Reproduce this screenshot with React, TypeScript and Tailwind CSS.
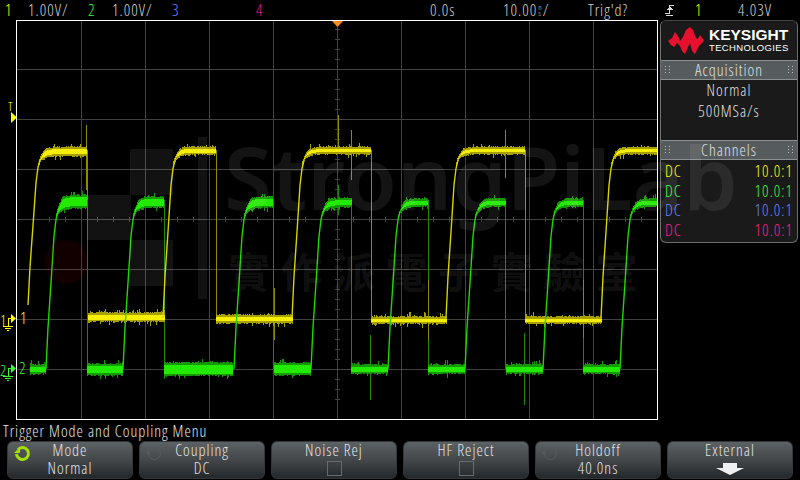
import React from 'react';

const SCOPE_FONT = "font-['Open_Sans',Roboto,sans-serif] font-light [font-stretch:condensed] tracking-[1px]";

// deterministic noise so the traces do not change between renders
function makeRand(seed: number) {
  let s = seed;
  return () => {
    s = (s * 16807) % 2147483647;
    return s / 2147483647;
  };
}

const RISE: [number, number][] = [[0, 0], [2, 0.25], [5, 0.52], [8, 0.8], [10, 0.9], [12, 0.95]];

function risePath(x0: number, low: number, high: number) {
  return RISE.map(([dx, f], i) => `${i ? 'L' : 'M'}${x0 + dx} ${low - (low - high) * f}`).join(' ');
}

type Band = { x0: number; x1: number; y: number; half: number; knee?: number };

// knee: how far below the plateau the band starts, it decays into the flat part
function bandPaths(bands: Band[], seed: number) {
  const rand = makeRand(seed);
  let core = '';
  let fringe = '';
  for (const b of bands) {
    for (let x = b.x0; x < b.x1; x++) {
      const dx = x - b.x0;
      const k = b.knee ? b.knee * Math.exp(-dx / 4) : 0;
      const half = b.knee ? b.half * Math.min(1, 0.35 + dx / 10) : b.half;
      const spikeOk = !b.knee || dx > 6;
      const extra = spikeOk && rand() > 0.93 ? 2 + rand() * 3 : rand() * 1.6;
      const extra2 = spikeOk && rand() > 0.93 ? 2 + rand() * 3 : rand() * 1.6;
      const y = b.y + k;
      fringe += `M${x + 0.5} ${Math.round(y - half - extra)}V${Math.round(y + half + extra2)}`;
      const top = Math.round(y - half + 1.5);
      const bot = Math.round(y + half - 1.5);
      if (bot > top) core += `M${x + 0.5} ${top}V${bot}`;
    }
  }
  return { core, fringe };
}

const YELLOW_BANDS: Band[] = [
  { x0: 38, x1: 87, y: 151.5, half: 4, knee: 13 },
  { x0: 173, x1: 216, y: 150.5, half: 3.5, knee: 13 },
  { x0: 302, x1: 371, y: 150.5, half: 3, knee: 13 },
  { x0: 456, x1: 525, y: 150.5, half: 3, knee: 13 },
  { x0: 611, x1: 657, y: 150.5, half: 3, knee: 13 },
  { x0: 88, x1: 165, y: 317, half: 4 },
  { x0: 216, x1: 293, y: 319, half: 3.5 },
  { x0: 371, x1: 447, y: 320, half: 3 },
  { x0: 525, x1: 602, y: 320, half: 3 },
];

const GREEN_BANDS: Band[] = [
  { x0: 56, x1: 87, y: 201.5, half: 6, knee: 14 },
  { x0: 133, x1: 164, y: 202, half: 5, knee: 14 },
  { x0: 244, x1: 273, y: 202, half: 5, knee: 14 },
  { x0: 321, x1: 352, y: 202.5, half: 4, knee: 14 },
  { x0: 398, x1: 428, y: 202.5, half: 3.5, knee: 14 },
  { x0: 475, x1: 506, y: 202.5, half: 3.5, knee: 14 },
  { x0: 553, x1: 583, y: 202.5, half: 3.5, knee: 14 },
  { x0: 630, x1: 657, y: 202.5, half: 3.5, knee: 14 },
  { x0: 30, x1: 46, y: 369, half: 4 },
  { x0: 87, x1: 123, y: 369.5, half: 5 },
  { x0: 164, x1: 233, y: 369, half: 6 },
  { x0: 274, x1: 311, y: 369, half: 5.5 },
  { x0: 351, x1: 388, y: 369, half: 4 },
  { x0: 428, x1: 465, y: 369, half: 4 },
  { x0: 506, x1: 543, y: 369, half: 4 },
  { x0: 583, x1: 620, y: 369, half: 4 },
];

const YELLOW_RISES = [28, 163, 292, 446, 601];
const GREEN_RISES = [46, 123, 234, 311, 388, 465, 543, 620];
const YELLOW_FALLS = [87, 216, 371, 525];
const GREEN_FALLS = [87, 164, 273, 351, 428, 505, 583];

const yellow = bandPaths(YELLOW_BANDS, 4711);
const green = bandPaths(GREEN_BANDS, 9241);

const V_GRID = [81, 145, 209, 273, 337, 401, 465, 529, 593];
const H_GRID = [69, 119, 169, 219, 269, 319, 369];

function Traces() {
  const hTicks = Array.from({ length: 39 }, (_, i) => 33 + i * 16);
  const vTicks = Array.from({ length: 38 }, (_, i) => 29 + i * 10);
  return (
    <svg className="block w-[640px] h-[398px]" viewBox="17 21 640 398" shapeRendering="crispEdges">
      {V_GRID.map((x) => <path key={x} d={`M${x + 0.5} 21V419`} stroke="#424242" />)}
      {H_GRID.map((y) => <path key={y} d={`M17 ${y + 0.5}H657`} stroke="#424242" />)}
      {hTicks.map((x) => <path key={x} d={`M${x + 0.5} 217V222`} stroke="#424242" />)}
      {vTicks.map((y) => <path key={y} d={`M335 ${y + 0.5}H340`} stroke="#424242" />)}

      {/* falling edges and glitches, drawn dim */}
      {YELLOW_FALLS.map((x) => <path key={x} d={`M${x + 0.5} 150V318`} stroke="#8f8a00" />)}
      {GREEN_FALLS.map((x) => <path key={x} d={`M${x + 0.5} 200V369`} stroke="#1c8a00" />)}
      <path d="M86.5 125V190M338.5 115V150M351.5 130V180M371.5 150V170M505.5 130V178M274.5 288V340M428.5 280V340M583.5 280V338" stroke="#8f8a00" />
      <path d="M370.5 335V400M524.5 333V405M338.5 185V215" stroke="#1c8a00" />

      <path d={yellow.fringe} stroke="#a8a000" fill="none" />
      <path d={green.fringe} stroke="#149a00" fill="none" />
      <path d={yellow.core} stroke="#f6f000" fill="none" />
      <path d={green.core} stroke="#22ea00" fill="none" />

      <g fill="none" shapeRendering="auto" strokeWidth="1.4">
        {YELLOW_RISES.map((x, i) => (
          <path key={x} d={risePath(x, i === 0 ? 305 : 318, 152)} stroke="#d8d200" />
        ))}
        {GREEN_RISES.map((x) => <path key={x} d={risePath(x, 369, 203)} stroke="#1fd800" />)}
      </g>

      <path d="M332 21H343L337.5 27Z" fill="#ff8a1c" shapeRendering="auto" />
    </svg>
  );
}

function Watermark() {
  return (
    <div className="absolute inset-0 pointer-events-none overflow-hidden">
      <svg className="absolute left-0 top-0 w-[800px] h-[480px]" viewBox="0 0 800 480">
        <path d="M130 149H173V195H130ZM87 195H131V240H87ZM130 240H173V286H130ZM198 137H207V299H198Z" fill="#ffffff" fillOpacity="0.07" />
        <circle cx="66" cy="262" r="22" fill="#ff0000" fillOpacity="0.07" />
      </svg>
      <div className="absolute left-[224px] top-[126px] text-[87px] leading-[100px] font-semibold tracking-normal whitespace-nowrap text-white/[0.08] font-['Noto_Sans',sans-serif] [font-stretch:normal]">
        StrongPiLab
      </div>
      <div className="absolute left-[228px] top-[245px] text-[42px] leading-[50px] font-bold tracking-[10.5px] whitespace-nowrap text-white/[0.08] font-['Noto_Sans_CJK_TC',sans-serif] [font-stretch:normal]">
        實作派電子實驗室
      </div>
    </div>
  );
}

function GroundMark({ color }: { color: string }) {
  return (
    <svg className="block w-[16px] h-[20px]" viewBox="0 0 16 20" shapeRendering="crispEdges">
      <path d="M8.5 14V6.5H11" stroke={color} fill="none" />
      <path d="M11 2L16 6.5L11 11Z" fill={color} shapeRendering="auto" />
      <path d="M3 14.5H13M5 16.5H11M7 18.5H9" stroke={color} />
    </svg>
  );
}

function ChannelMarkers() {
  return (
    <>
      <div className="absolute left-[8px] top-[100px] text-[13px] leading-[13px] text-[#ffff00]">T</div>
      <svg className="absolute left-[11px] top-[112px] w-[6px] h-[11px]" viewBox="0 0 6 11">
        <path d="M0 0L6 5.5L0 11Z" fill="#ffff00" />
      </svg>
      <div className="absolute left-0 top-[312px] w-[32px] h-[20px]">
        <div className="absolute left-0 top-0"><GroundMark color="#ffff00" /></div>
        <div className="absolute left-0 top-0 text-[15px] leading-[16px] text-[#ffff00]">1</div>
        <div className="absolute left-[20px] top-[-2px] text-[16px] leading-[16px] text-[#ffff00]">1</div>
      </div>
      <div className="absolute left-0 top-[362px] w-[32px] h-[20px]">
        <div className="absolute left-0 top-0"><GroundMark color="#33ff33" /></div>
        <div className="absolute left-0 top-0 text-[15px] leading-[16px] text-[#33ff33]">2</div>
        <div className="absolute left-[19px] top-[-2px] text-[16px] leading-[16px] text-[#33ff33]">2</div>
      </div>
    </>
  );
}

function KeysightLogo() {
  return (
    <div className="flex h-[39px] items-center gap-[4px] pl-[7px] bg-[#1a1a1a]">
      <svg className="block w-[37px] h-[28px] shrink-0" viewBox="668 26 37 28">
        <path
          d="M668 40L672 37L675 31L678 35L680 40L683 36L686 29L690 26L693 29L696 37L698 38L700 34L703 38L704 40L701 43L699 45L697 49L695 53L692 50L690 42L688 46L685 53L682 50L680 45L677 42L674 46L671 44Z"
          fill="#e8112d"
        />
      </svg>
      <div className="flex flex-col text-white font-['Liberation_Sans',sans-serif] [font-stretch:normal]">
        <span className="text-[15.5px] leading-[15px] font-bold tracking-normal">KEYSIGHT</span>
        <span className="text-[9.5px] leading-[12px] font-normal tracking-[0.35px]">TECHNOLOGIES</span>
      </div>
    </div>
  );
}

function GripDots() {
  return (
    <svg className="block w-[5px] h-[8px]" viewBox="0 0 5 8" shapeRendering="crispEdges">
      <path d="M0 0h1v1H0zM4 0h1v1H4zM0 3h1v1H0zM4 3h1v1H4zM0 6h1v1H0zM4 6h1v1H4z" fill="#bdbdbd" />
    </svg>
  );
}

function PanelHeader({ label }: { label: string }) {
  return (
    <div className="flex h-[20px] items-center justify-between px-[4px] bg-[#565b5d] border-y border-[#8a8f90] text-[16px] text-[#e0e0e0]">
      <GripDots />
      <span className="-mt-[1px]">{label}</span>
      <GripDots />
    </div>
  );
}

const CHANNELS = [
  { color: 'text-[#ffff00]' },
  { color: 'text-[#33ff33]' },
  { color: 'text-[#6a88ff]' },
  { color: 'text-[#ff1a94]' },
];

function SidePanel() {
  return (
    <div className="ml-[2px] w-[138px] h-[223px] rounded-[6px] border border-[#6e6e6e] border-t-[#444444] overflow-hidden bg-[#1a1a1a] shrink-0">
      <KeysightLogo />
      <PanelHeader label="Acquisition" />
      <div className="flex h-[60px] flex-col items-center text-[16px] leading-[21px] text-[#e0e0e0]">
        <span>Normal</span>
        <span>500MSa/s</span>
      </div>
      <PanelHeader label="Channels" />
      <div className="flex flex-col pt-[2px] px-[4px] text-[16px] leading-[19.5px]">
        {CHANNELS.map((ch, i) => (
          <div key={i} className={`flex justify-between ${ch.color}`}>
            <span>DC</span>
            <span>10.0:1</span>
          </div>
        ))}
      </div>
    </div>
  );
}

function TurnIcon({ active }: { active?: boolean }) {
  const color = active ? '#a6e000' : '#575b5d';
  return (
    <svg className="absolute left-[5px] top-[2px] w-[18px] h-[18px]" viewBox="0 0 18 18">
      <path
        d="M5 5.5A6 6 0 1 1 3.5 10"
        fill="none"
        stroke={color}
        strokeWidth={active ? 3 : 1}
      />
      <path d={active ? 'M1 9H7V3Z' : 'M1 9L4.5 5.5V12Z'} fill={color} />
    </svg>
  );
}

function CheckBox() {
  return <div className="w-[15px] h-[15px] border border-[#6a6a6a]" />;
}

function DownArrow() {
  return (
    <svg className="block w-[28px] h-[12px] mt-[1px]" viewBox="0 0 28 12">
      <path d="M7 0H21V5H28L14 12L0 5H7Z" fill="#f0f0f0" />
    </svg>
  );
}

function SoftKey({ title, children, knob }: { title: string; children?: React.ReactNode; knob?: 'on' | 'off' }) {
  return (
    <div className="relative flex flex-col items-center h-[38px] rounded-[6px] border border-[#33373a] bg-gradient-to-b from-[#5c6163] via-[#43474a] to-[#25282a] text-[16px] leading-[17px] text-[#e4e4e4]">
      {knob && <TurnIcon active={knob === 'on'} />}
      <span className="h-[17px]">{title}</span>
      <div className="flex h-[19px] items-center">{children}</div>
    </div>
  );
}

export default function App() {
  return (
    <div className={`relative flex flex-col w-[800px] h-[480px] overflow-hidden bg-black ${SCOPE_FONT}`}>
      {/* status line */}
      <div className="flex h-[20px] items-center text-[16px] text-[#d4d4d4] whitespace-nowrap">
        <span className="ml-[5px] w-[23px] text-[#ffff00]">1</span>
        <span className="w-[60px]">1.00V/</span>
        <span className="w-[24px] text-[#33ff33]">2</span>
        <span className="w-[60px]">1.00V/</span>
        <span className="w-[84px] text-[#6a88ff]">3</span>
        <span className="w-[174px] text-[#ff1a94]">4</span>
        <span className="w-[73px]">0.0s</span>
        <span className="flex w-[85px] items-center">
          10.00
          <span className="flex flex-col mx-[1px] text-[8px] leading-[6px] tracking-normal">
            <span>n</span>
            <span>s</span>
          </span>
          /
        </span>
        <span className="w-[77px]">Trig'd?</span>
        <svg className="block w-[10px] h-[12px] mr-[20px]" viewBox="0 0 10 12" shapeRendering="crispEdges">
          <path d="M0 9.5H4.5V1.5H9M1 11.5H8" stroke="#d8d8d8" fill="none" />
          <path d="M2 6H8L5 2Z" fill="#d8d8d8" />
        </svg>
        <span className="w-[43px] text-[#ffff00]">1</span>
        <span>4.03V</span>
      </div>

      {/* plot and side panel */}
      <div className="flex items-start h-[400px]">
        <div className="ml-[16px] w-[642px] h-[400px] border border-white shrink-0">
          <Traces />
        </div>
        <SidePanel />
      </div>

      {/* softkey menu */}
      <div className="flex h-[21px] items-center pl-[3px] text-[16px] text-[#e4e4e4]">
        Trigger Mode and Coupling Menu
      </div>
      <div className="grid grid-cols-[repeat(6,126px)] gap-[6px] pl-[7px]">
        <SoftKey title="Mode" knob="on">Normal</SoftKey>
        <SoftKey title="Coupling" knob="off">DC</SoftKey>
        <SoftKey title="Noise Rej"><CheckBox /></SoftKey>
        <SoftKey title="HF Reject"><CheckBox /></SoftKey>
        <SoftKey title="Holdoff" knob="off">40.0ns</SoftKey>
        <SoftKey title="External"><DownArrow /></SoftKey>
      </div>

      <ChannelMarkers />
      <Watermark />
    </div>
  );
}
